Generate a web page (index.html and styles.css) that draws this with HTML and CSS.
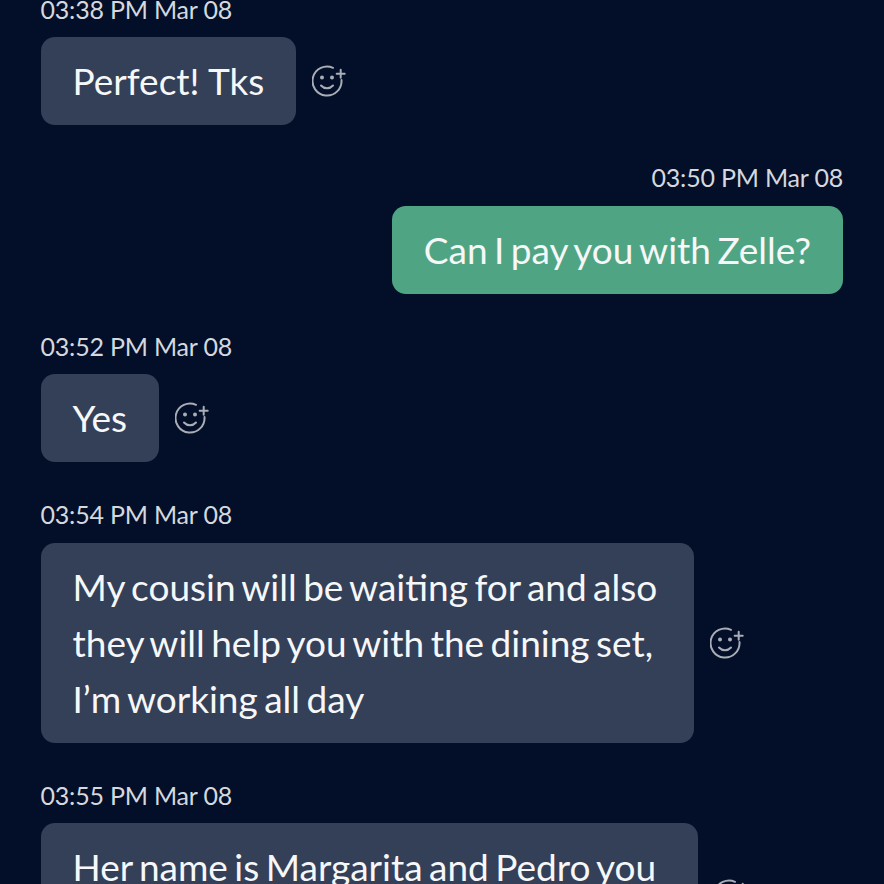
FILE: index.html
```html
<!DOCTYPE html>
<html lang="en">
<head>
    <meta charset="UTF-8">
    <meta name="viewport" content="width=device-width, initial-scale=1.0">
    <title>Chat</title>
    <link rel="stylesheet" href="styles.css">
</head>
<body>
    <!-- Reaction icon, reused by every incoming message -->
    <svg class="icon-defs" width="0" height="0">
        <symbol id="react" viewBox="0 0 34 34">
            <path d="M21 3.800A14.500 14.500 0 1 0 29.500 16" fill="none" stroke="currentColor" stroke-width="2" stroke-linecap="round"/>
            <circle cx="10" cy="13.500" r="2" fill="currentColor"/>
            <circle cx="20" cy="13.500" r="2" fill="currentColor"/>
            <path d="M9 21.500c3.200 3.600 8.800 3.600 12 0" fill="none" stroke="currentColor" stroke-width="2" stroke-linecap="round"/>
            <path d="M28.700 5.700v8M24.700 9.700h8" fill="none" stroke="currentColor" stroke-width="2" stroke-linecap="round"/>
        </symbol>
    </svg>

    <div class="thread">
        <div class="message">
            <div class="time">03:38 PM Mar 08</div>
            <div class="bubble-row">
                <div class="bubble bubble-short">Perfect! Tks</div>
                <svg class="react"><use href="#react"/></svg>
            </div>
        </div>

        <div class="message mine">
            <div class="time">03:50 PM Mar 08</div>
            <div class="bubble-row">
                <div class="bubble">Can I pay you with Zelle?</div>
            </div>
        </div>

        <div class="message">
            <div class="time">03:52 PM Mar 08</div>
            <div class="bubble-row">
                <div class="bubble">Yes</div>
                <svg class="react"><use href="#react"/></svg>
            </div>
        </div>

        <div class="message">
            <div class="time">03:54 PM Mar 08</div>
            <div class="bubble-row">
                <div class="bubble bubble-cousin">My cousin will be waiting for and also<br>they will help you with the dining set,<br>I’m working all day</div>
                <svg class="react"><use href="#react"/></svg>
            </div>
        </div>

        <div class="message">
            <div class="time">03:55 PM Mar 08</div>
            <div class="bubble-row">
                <div class="bubble bubble-names">Her name is Margarita and Pedro you<br>will see them at the house</div>
                <svg class="react"><use href="#react"/></svg>
            </div>
        </div>
    </div>
</body>
</html>
```

FILE: styles.css
```css
html, body {
    height: 100%;
}

body {
    background-color: #030f28;
    color: #f6f7f9;
    font-family: 'Lato', sans-serif;
    margin: 0;
    overflow: hidden;
}

.icon-defs {
    display: block;
}

.thread {
    display: flex;
    flex-direction: column;
    gap: 35.100px;
    margin-top: -8.500px;
    padding: 0 41px 0 40.500px;
}

.message {
    display: flex;
    flex-direction: column;
    align-items: flex-start;
    gap: 11.500px;
}

.message.mine {
    align-items: flex-end;
}

.time {
    font-size: 25px;
    line-height: 34px;
    letter-spacing: -0.200px;
    color: #d5d8de;
}

.bubble-row {
    display: flex;
    align-items: center;
    gap: 16px;
}

.bubble {
    background-color: #343f58;
    border-radius: 14px;
    padding: 16px 32px;
    font-size: 37px;
    line-height: 56px;
    word-spacing: -3px;
    white-space: nowrap;
}

.bubble-short {
    word-spacing: 0;
}

.bubble-cousin {
    padding-right: 37px;
}

.bubble-names {
    padding-right: 42px;
}

.mine .bubble {
    background-color: #4fa583;
}

.react {
    width: 34px;
    height: 34px;
    color: #a9adb6;
    flex-shrink: 0;
}
```
